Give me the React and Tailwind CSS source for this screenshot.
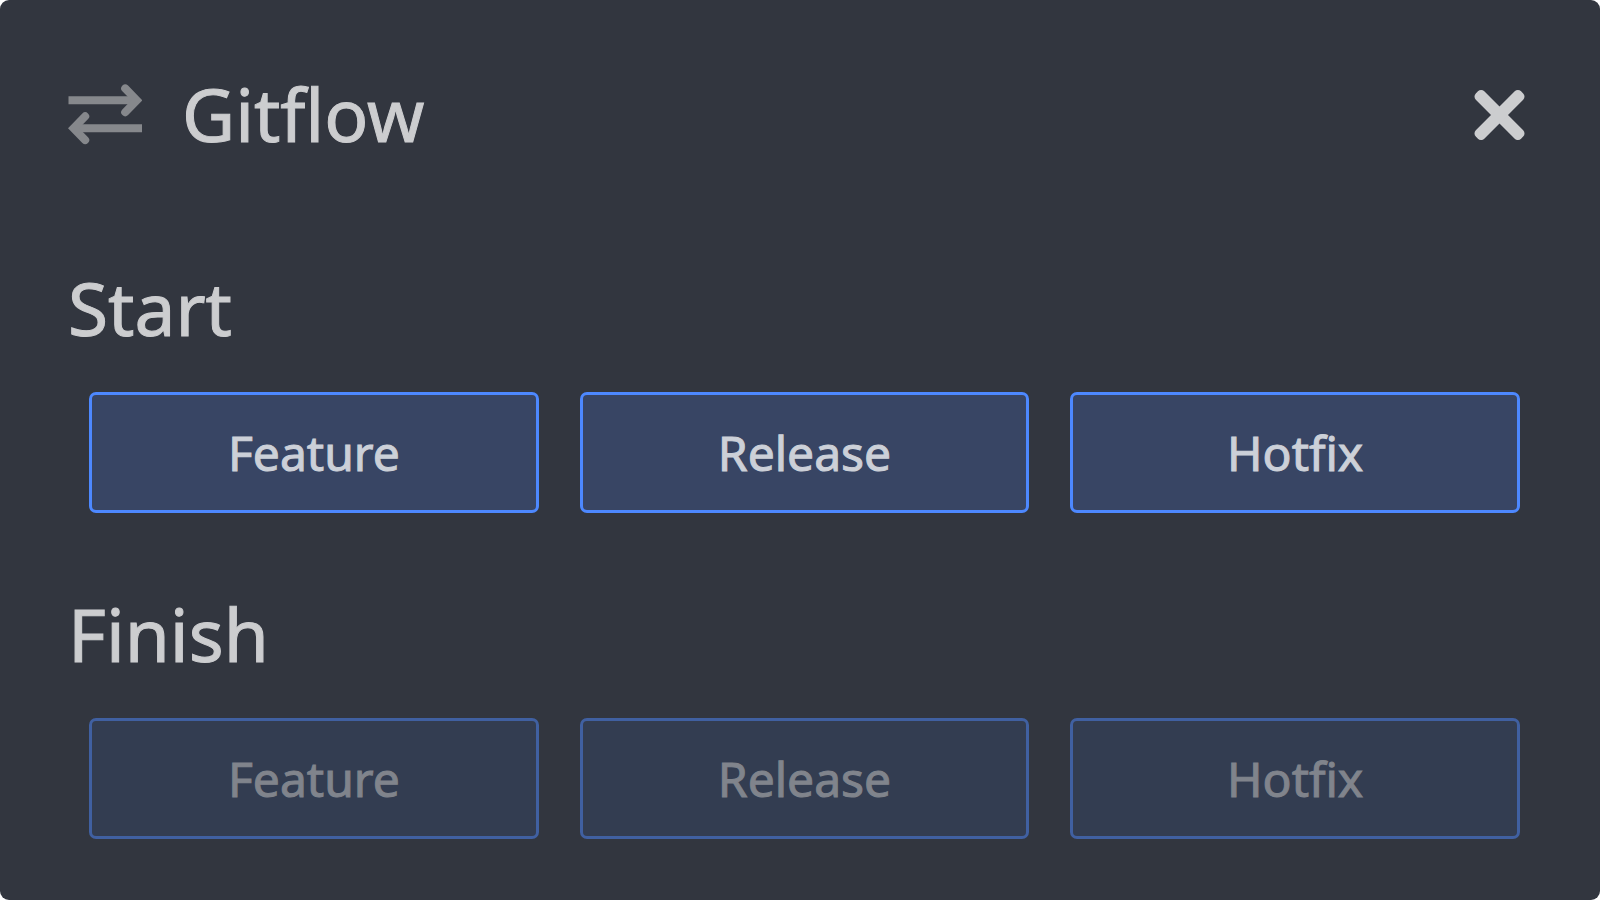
import React from "react";

const flows = ["Feature", "Release", "Hotfix"];

// Two opposite arrows shown beside the dialog title
const SwapIcon = () => (
  <svg
    viewBox="0 0 74 62"
    className="h-[62px] w-[74px] shrink-0 text-[#86888c]"
    fill="none"
    stroke="currentColor"
    strokeWidth="8"
    aria-hidden="true"
  >
    <path d="M0.5 17.3H68" />
    <path d="M57.2 5.4L68.8 17.3L57.2 29.2" strokeLinecap="round" />
    <path d="M74 45.2H6" />
    <path d="M17.2 33.3L5.6 45.2L17.2 57.1" strokeLinecap="round" />
  </svg>
);

const CloseIcon = () => (
  <svg viewBox="0 0 52 52" className="size-[52px]" fill="currentColor" aria-hidden="true">
    <rect x="-6.5" y="21" width="64" height="12" rx="4.5" transform="rotate(45 25.5 27)" />
    <rect x="-6.5" y="21" width="64" height="12" rx="4.5" transform="rotate(-45 25.5 27)" />
  </svg>
);

// A titled row with one button for each kind of branch
const FlowSection = ({ title, disabled = false }) => (
  <section>
    <h2 className="text-[73px] leading-[100px]">{title}</h2>
    <div className="mt-[34px] ml-[21px] mr-[12px] grid grid-cols-3 gap-[41px]">
      {flows.map((flow) => (
        <button
          key={flow}
          type="button"
          disabled={disabled}
          className="h-[121px] rounded-[7px] border-3 border-[#4d88ff] bg-[#384564] text-[48px] leading-[68px] text-[#ccd0d8] disabled:border-[#4060a1] disabled:bg-[#333d51] disabled:text-[#80848c]"
        >
          {flow}
        </button>
      ))}
    </div>
  </section>
);

const App = () => {
  return (
    <div className="min-h-screen bg-white font-['Noto_Sans',sans-serif] [-webkit-text-stroke:1px_currentColor]">
      <main className="min-h-screen rounded-[9px] bg-[#32363f] px-[68px] pt-[64px] pb-[58px] text-[#cccdcf]">
        <header className="flex items-center">
          <SwapIcon />
          <h1 className="ml-[40px] text-[73px] leading-[100px]">Gitflow</h1>
          <button type="button" aria-label="Close" className="mr-[6px] ml-auto">
            <CloseIcon />
          </button>
        </header>
        <div className="mt-[94px] flex flex-col gap-[71px]">
          <FlowSection title="Start" />
          <FlowSection title="Finish" disabled />
        </div>
      </main>
    </div>
  );
};

export default App;
